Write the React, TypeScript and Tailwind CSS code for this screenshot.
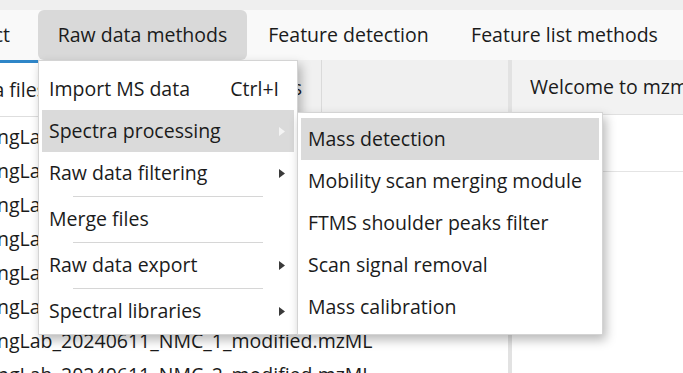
import { ReactNode } from "react";

const files = [
  "ngLab_20240611_Blank_1.mzML",
  "ngLab_20240611_Blank_2.mzML",
  "ngLab_20240611_LCO_1.mzML",
  "ngLab_20240611_LCO_2.mzML",
  "ngLab_20240611_LFP_1.mzML",
  "ngLab_20240611_LFP_2.mzML",
  "ngLab_20240611_NMC_1_modified.mzML",
  "ngLab_20240611_NMC_2_modified.mzML",
];

const Arrow = ({ light }: { light?: boolean }) => (
  <svg width="6" height="9" viewBox="0 0 6 9" className="shrink-0">
    <path d="M0 0 L6 4.5 L0 9 Z" fill={light ? "#f4f4f4" : "#3a3a3a"} />
  </svg>
);

const Item = ({ children, active, right }: { children: ReactNode; active?: boolean; right?: ReactNode }) => (
  <div
    className={`h-[42px] mx-[3px] pl-[7px] pr-[9px] flex items-center justify-between whitespace-nowrap ${
      active ? "bg-[#dadada]" : ""
    }`}
  >
    <span>{children}</span>
    {right}
  </div>
);

const Sep = () => (
  <div className="h-[4px] flex items-center px-[34px]">
    <div className="h-px w-full bg-[#d6d6d6]" />
  </div>
);

export default function App() {
  return (
    <div className="w-[683px] h-[373px] overflow-hidden relative bg-white text-[19.5px] text-[#1b1b1b] font-['Open_Sans',sans-serif]">
      <div className="h-[10px] bg-[#efefef]" />
      <div className="h-[50px] bg-[#f9f9f9] flex">
        <div className="w-[38px] shrink-0 overflow-hidden flex justify-end items-center">
          <span className="whitespace-nowrap pr-[28px]">Project</span>
        </div>
        <div className="w-[209px] shrink-0 rounded-[6px] bg-[#d9d9d9] flex items-center justify-center whitespace-nowrap">
          Raw data methods
        </div>
        <div className="w-[203px] shrink-0 flex items-center justify-center whitespace-nowrap">Feature detection</div>
        <div className="w-[229px] shrink-0 flex items-center justify-center whitespace-nowrap">Feature list methods</div>
      </div>

      <div className="flex h-[313px]">
        <div className="w-[508px] shrink-0 flex flex-col overflow-hidden">
          <div className="h-[57px] shrink-0 bg-[#f0f0f0] border-b border-[#dedede] flex">
            <div className="w-[70px] shrink-0 bg-white border-t-[3px] border-[#2f86c8] overflow-hidden flex justify-end items-center">
              <span className="whitespace-nowrap pr-[24px]">Raw data files</span>
            </div>
            <div className="w-[252px] shrink-0 border-r border-[#dadada] flex items-center justify-end pr-[19px] whitespace-nowrap">
              Feature lists
            </div>
          </div>
          <div className="pt-[3px]">
            {files.map((f) => (
              <div key={f} className="h-[34px] flex items-center whitespace-nowrap -ml-[3px]">
                {f}
              </div>
            ))}
          </div>
        </div>
        <div className="w-[4px] shrink-0 bg-[#e2e2e2]" />
        <div className="flex-1 min-w-0 flex flex-col">
          <div className="h-[55px] bg-[#f2f2f2] border-b border-[#e0e0e0] flex items-center pl-[18px] whitespace-nowrap overflow-hidden">
            Welcome to mzmine
          </div>
          <div className="h-[57px] border-b border-[#e4e4e4]" />
        </div>
      </div>

      <div className="absolute left-[38px] top-[60px] w-[260px] bg-white border border-[#d4d4d4] pt-[7px] pb-[2px] shadow-[3px_5px_10px_rgba(0,0,0,0.28)]">
        <Item right={<span className="pr-[6px]">Ctrl+I</span>}>Import MS data</Item>
        <Item active right={<Arrow light />}>Spectra processing</Item>
        <Item right={<Arrow />}>Raw data filtering</Item>
        <Sep />
        <Item>Merge files</Item>
        <Sep />
        <Item right={<Arrow />}>Raw data export</Item>
        <Sep />
        <Item right={<Arrow />}>Spectral libraries</Item>
      </div>

      <div className="absolute left-[297px] top-[112px] w-[306px] bg-white border border-[#d4d4d4] pt-[5px] pb-[6px] shadow-[3px_5px_10px_rgba(0,0,0,0.28)]">
        <Item active>Mass detection</Item>
        <Item>Mobility scan merging module</Item>
        <Item>FTMS shoulder peaks filter</Item>
        <Item>Scan signal removal</Item>
        <Item>Mass calibration</Item>
      </div>
    </div>
  );
}
